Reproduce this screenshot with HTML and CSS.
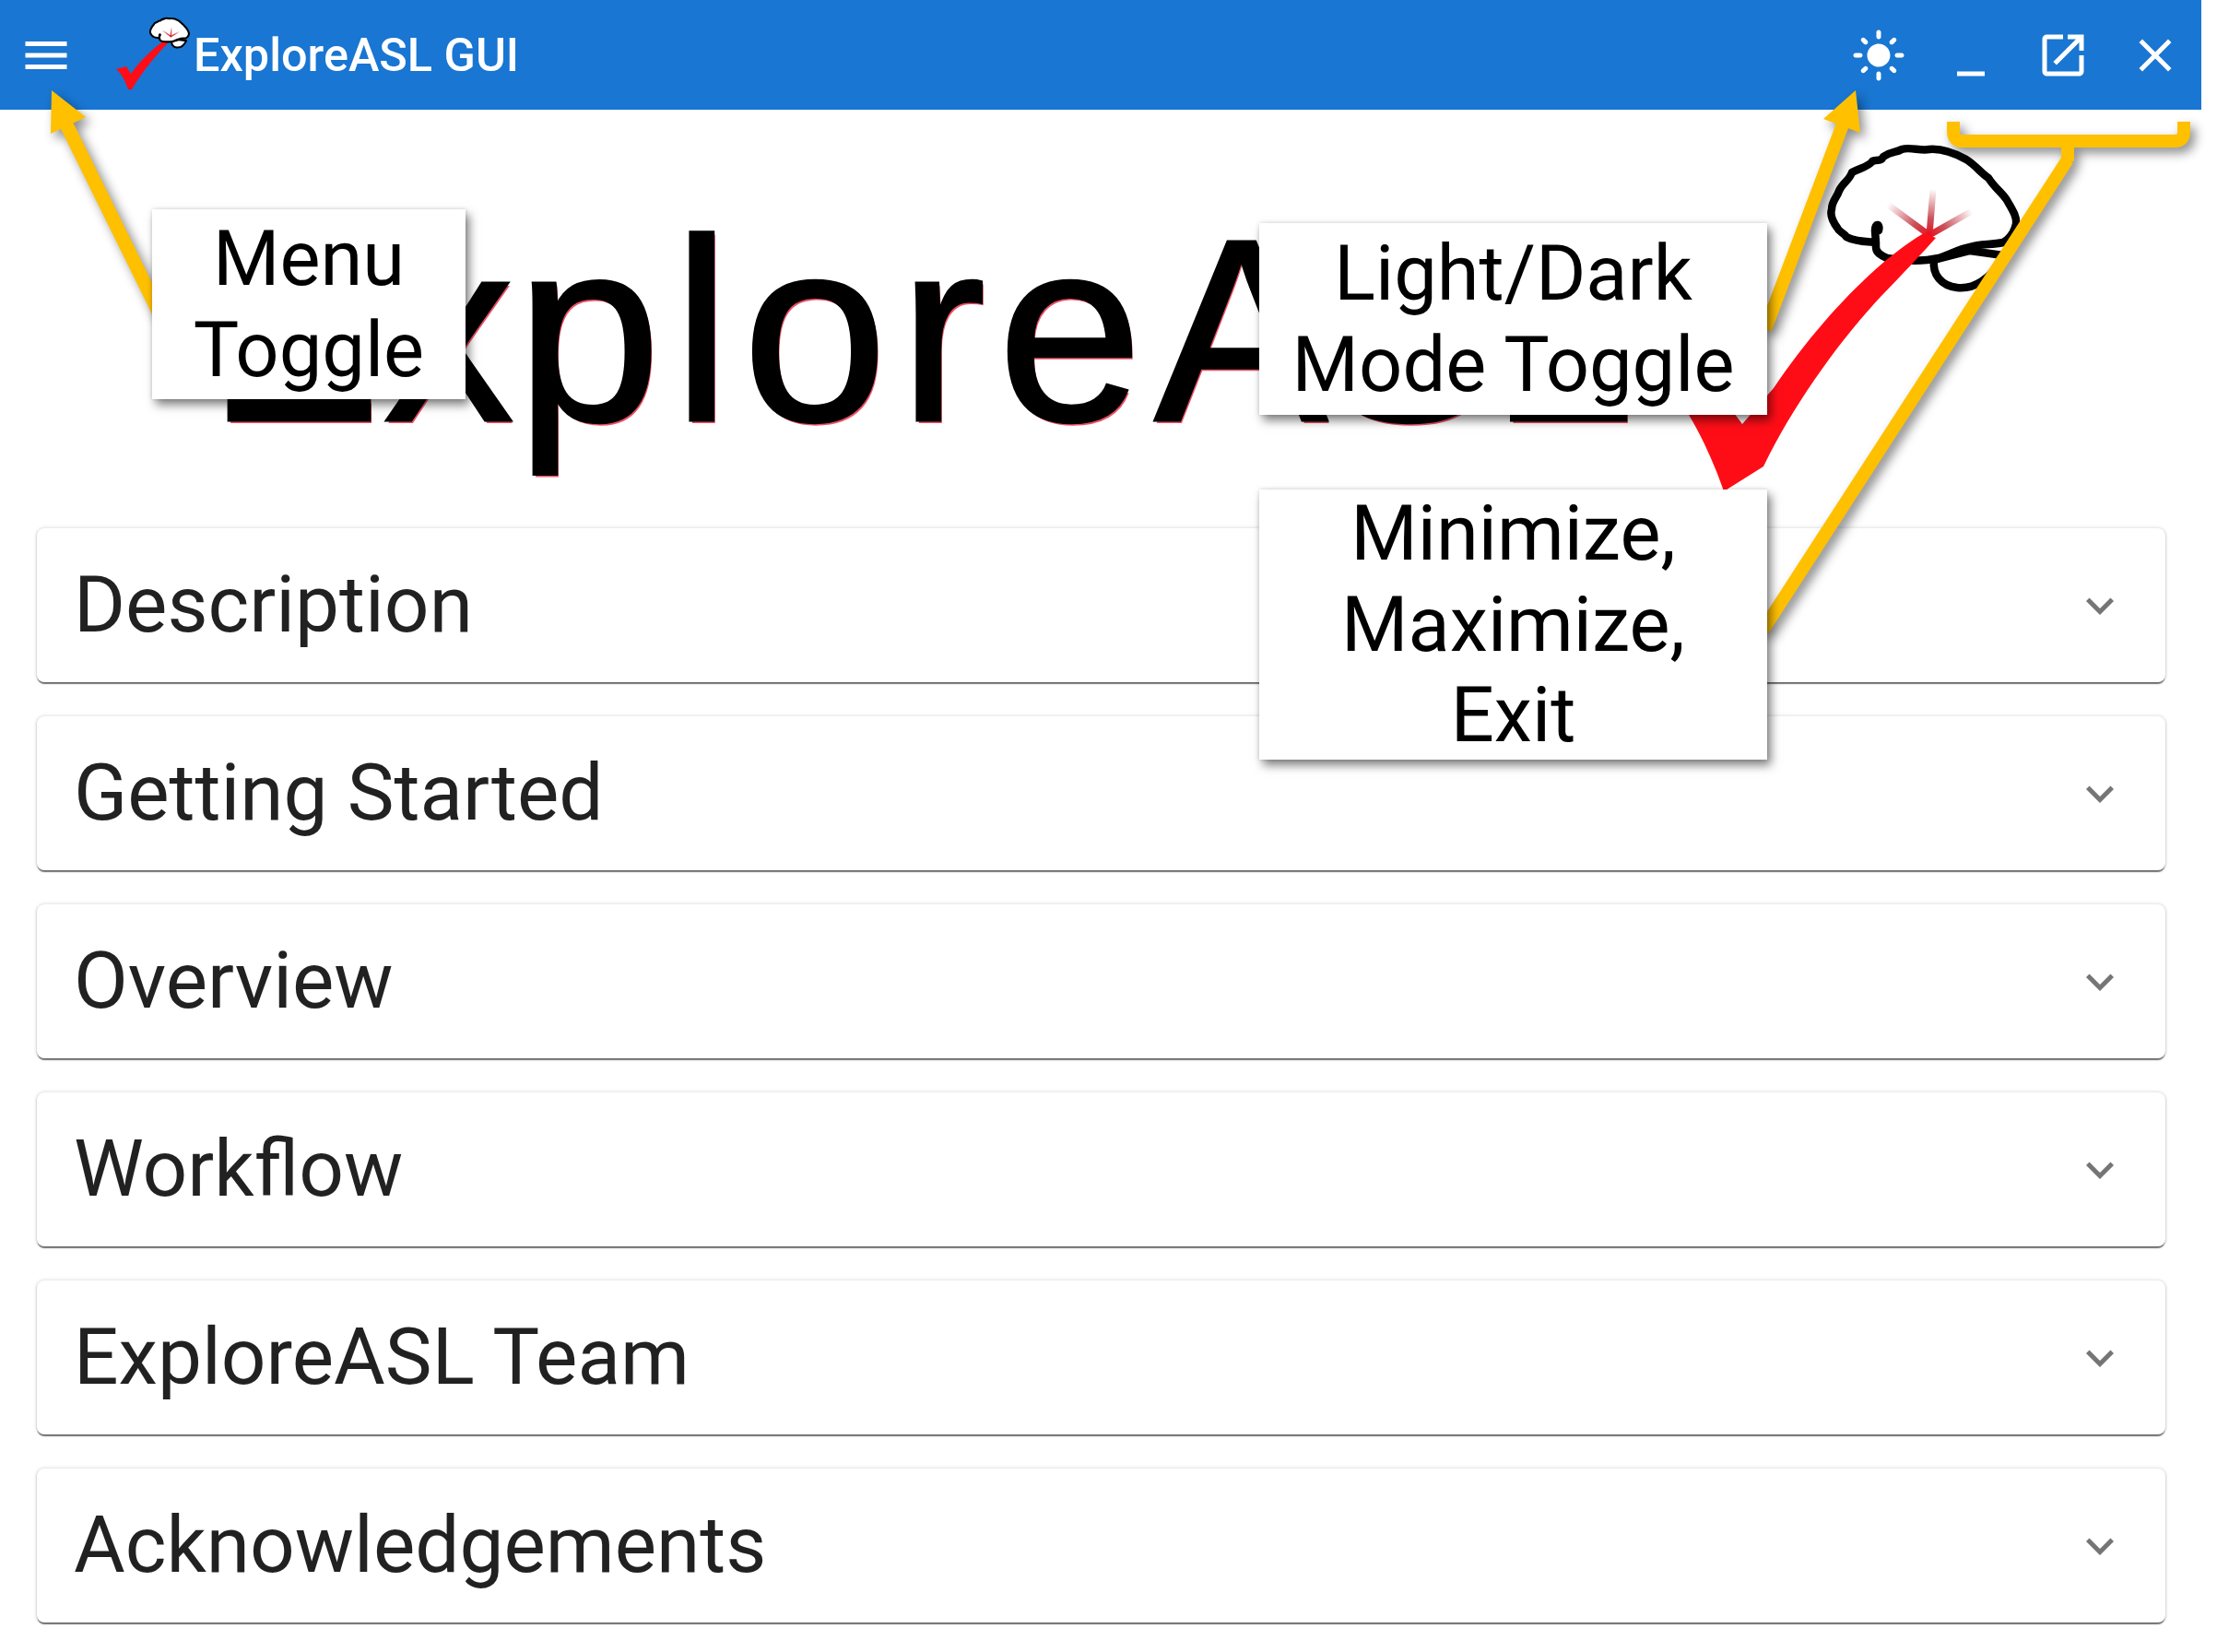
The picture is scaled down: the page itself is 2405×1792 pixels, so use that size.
FILE: index.html
```html
<!DOCTYPE html>
<html lang="en">
<head>
<meta charset="utf-8">
<title>ExploreASL GUI</title>
<link rel="stylesheet" href="styles.css">
</head>
<body>
<div class="app">
  <header class="appbar">
    <button class="icon-btn"><svg class="icon" viewBox="0 0 24 24"><path d="M3 18h18v-2H3v2zm0-5h18v-2H3v2zm0-7v2h18V6H3z"/></svg></button>
    <svg class="mini-logo" viewBox="120 0 90 119">
      <path class="check" d="M126 75 L137 72 L142 80 C152 66 166 52 180 43 L187 42 C170 58 154 78 143 97 L139 97 C136 88 132 80 126 75 Z"/>
      <use class="mini-brain" href="#brain" transform="translate(163 20) scale(.21) translate(-1987 -162)"/>
    </svg>
    <span class="app-title">ExploreASL GUI</span>
    <span class="spacer"></span>
    <button class="icon-btn"><svg class="icon" viewBox="0 0 24 24"><path d="M12 7c-2.76 0-5 2.24-5 5s2.24 5 5 5 5-2.24 5-5-2.24-5-5-5zM2 13h2c.55 0 1-.45 1-1s-.45-1-1-1H2c-.55 0-1 .45-1 1s.45 1 1 1zm18 0h2c.55 0 1-.45 1-1s-.45-1-1-1h-2c-.55 0-1 .45-1 1s.45 1 1 1zM11 2v2c0 .55.45 1 1 1s1-.45 1-1V2c0-.55-.45-1-1-1s-1 .45-1 1zm0 18v2c0 .55.45 1 1 1s1-.45 1-1v-2c0-.55-.45-1-1-1s-1 .45-1 1zM5.99 4.58c-.39-.39-1.03-.39-1.41 0-.39.39-.39 1.03 0 1.41l1.06 1.06c.39.39 1.03.39 1.41 0s.39-1.03 0-1.41L5.99 4.58zm12.37 12.37c-.39-.39-1.03-.39-1.41 0-.39.39-.39 1.03 0 1.41l1.06 1.06c.39.39 1.03.39 1.41 0 .39-.39.39-1.03 0-1.41l-1.06-1.06zm1.06-10.96c.39-.39.39-1.03 0-1.41-.39-.39-1.03-.39-1.41 0l-1.06 1.06c-.39.39-.39 1.03 0 1.41s1.03.39 1.41 0l1.06-1.06zM7.05 18.36c.39-.39.39-1.03 0-1.41-.39-.39-1.03-.39-1.41 0l-1.06 1.06c-.39.39-.39 1.03 0 1.41s1.03.39 1.41 0l1.06-1.06z"/></svg></button>
    <button class="icon-btn"><svg class="icon" viewBox="0 0 24 24"><path d="M6 19h12v2H6z"/></svg></button>
    <button class="icon-btn"><svg class="icon" viewBox="0 0 24 24"><path d="M19 19H5V5h7V3H5c-1.11 0-2 .9-2 2v14c0 1.1.89 2 2 2h14c1.1 0 2-.9 2-2v-7h-2v7zM14 3v2h3.59l-9.83 9.83 1.41 1.41L19 6.41V10h2V3h-7z"/></svg></button>
    <button class="icon-btn"><svg class="icon" viewBox="0 0 24 24"><path d="M19 6.41 17.59 5 12 10.59 6.41 5 5 6.41 10.59 12 5 17.59 6.41 19 12 13.41 17.59 19 19 17.59 13.41 12z"/></svg></button>
  </header>

  <section class="hero">
    <h1 class="hero-text"><span class="ls-ex">Ex</span><span class="ls-plore">plore</span><span class="ls-asl">ASL</span></h1>
    <svg class="hero-mark" viewBox="1780 119 425 454">
      <defs>
        <linearGradient id="rayTop" gradientUnits="userSpaceOnUse" x1="2093" y1="255" x2="2097" y2="205"><stop offset="0" stop-color="#e8101e"/><stop offset=".35" stop-color="#c9505a"/><stop offset="1" stop-color="#c9505a" stop-opacity="0"/></linearGradient>
        <linearGradient id="rayLeft" gradientUnits="userSpaceOnUse" x1="2093" y1="255" x2="2048" y2="222"><stop offset="0" stop-color="#e8101e"/><stop offset=".35" stop-color="#c9505a"/><stop offset="1" stop-color="#c9505a" stop-opacity="0"/></linearGradient>
        <linearGradient id="rayRight" gradientUnits="userSpaceOnUse" x1="2093" y1="255" x2="2139" y2="229"><stop offset="0" stop-color="#e8101e"/><stop offset=".35" stop-color="#c9505a"/><stop offset="1" stop-color="#c9505a" stop-opacity="0"/></linearGradient>
        <g id="brain">
          <path class="brain-line" d="M2098 282 C2096 298 2106 310 2123 312 C2140 314 2160 304 2173 277 L2137 272 L2098 282 Z"/>
          <path class="brain-line" d="M2038 250 C2040 243 2034 241 2034 250 L2035 263 C2024 262 2012 262 2003 257 C2000 252 1995 252 1993 247 C1988 240 1985 233 1987 227 C1987 218 1993 214 1995 207 C1999 198 2006 196 2009 187 C2018 182 2027 181 2031 175 C2038 172 2040 176 2043 170 C2052 164 2056 166 2063 162 C2072 159 2083 164 2093 162 C2106 161 2122 167 2133 173 C2144 180 2148 187 2157 193 C2164 204 2171 208 2177 217 C2182 226 2188 234 2187 243 C2185 252 2180 259 2173 263 C2160 266 2148 264 2137 268 C2125 270 2116 276 2103 280 C2085 284 2065 283 2047 280 C2040 277 2035 274 2035 268 L2035 263"/>
          <path class="ray" stroke="url(#rayTop)" d="M2093 255 L2097 205"/>
          <path class="ray" stroke="url(#rayLeft)" d="M2093 255 L2048 222"/>
          <path class="ray" stroke="url(#rayRight)" d="M2093 255 L2139 229"/>
        </g>
      </defs>
      <use class="big-brain" href="#brain"/>
      <path class="check" d="M2087 253 C2040 280 1975 345 1924 421 L1890 460 L1860 420 L1800 400 L1832 450 C1850 480 1862 510 1870 533 L1913 506 C1945 440 1995 370 2040 322 C2065 296 2085 275 2100 258 Z"/>
    </svg>
  </section>

  <main class="panels">
    <article class="panel"><h2 class="panel-title">Description</h2><svg class="chevron" viewBox="0 0 24 24"><path d="M16.59 8.59 12 13.17 7.41 8.59 6 10l6 6 6-6z"/></svg></article>
    <article class="panel"><h2 class="panel-title">Getting Started</h2><svg class="chevron" viewBox="0 0 24 24"><path d="M16.59 8.59 12 13.17 7.41 8.59 6 10l6 6 6-6z"/></svg></article>
    <article class="panel"><h2 class="panel-title">Overview</h2><svg class="chevron" viewBox="0 0 24 24"><path d="M16.59 8.59 12 13.17 7.41 8.59 6 10l6 6 6-6z"/></svg></article>
    <article class="panel"><h2 class="panel-title">Workflow</h2><svg class="chevron" viewBox="0 0 24 24"><path d="M16.59 8.59 12 13.17 7.41 8.59 6 10l6 6 6-6z"/></svg></article>
    <article class="panel"><h2 class="panel-title">ExploreASL Team</h2><svg class="chevron" viewBox="0 0 24 24"><path d="M16.59 8.59 12 13.17 7.41 8.59 6 10l6 6 6-6z"/></svg></article>
    <article class="panel"><h2 class="panel-title">Acknowledgements</h2><svg class="chevron" viewBox="0 0 24 24"><path d="M16.59 8.59 12 13.17 7.41 8.59 6 10l6 6 6-6z"/></svg></article>
  </main>
</div>

<svg class="arrows" viewBox="0 0 2405 1792">
  <g class="arrow-group">
    <path class="arrow-line arrow-wide" d="M68 127 L172 338"/>
    <path class="arrow-head" d="M56 98 L93 127 L55 145 Z"/>
    <path class="arrow-line" d="M1999 135 L1915 357"/>
    <path class="arrow-head" d="M2013 98 L1978 129 L2018 144 Z"/>
    <path class="arrow-line" d="M2119 132 V143 Q2119 153 2129 153 H2359 Q2369 153 2369 143 V132"/>
    <path class="arrow-line" d="M2243 153 V175"/>
    <path class="arrow-line" d="M2243 173 L1912 684"/>
  </g>
</svg>

<div class="note note-menu">Menu<br>Toggle</div>
<div class="note note-mode">Light/Dark<br>Mode Toggle</div>
<div class="note note-window">Minimize,<br>Maximize,<br>Exit</div>
</body>
</html>
```
FILE: styles.css
```css
* { box-sizing: border-box; }
html, body { margin: 0; padding: 0; background: #fff; }
body { width: 2405px; height: 1792px; position: relative; overflow: hidden; font-family: Roboto, "Liberation Sans", sans-serif; }
.app { width: 2388px; }

.appbar { height: 119px; background: #1976d2; color: #fff; display: flex; align-items: center; }
.icon-btn { width: 100px; height: 100px; padding: 20px; border: 0; background: none; color: inherit; display: flex; flex: none; }
.icon { width: 60px; height: 60px; fill: currentColor; display: block; }
.mini-logo { width: 90px; height: 119px; margin-left: 20px; flex: none; display: block; }
.app-title { font-size: 50.4px; font-weight: 500; line-height: 1; white-space: nowrap; padding-top: 2px; }
.spacer { flex: 1; }

.hero { position: relative; height: 454px; padding: 99px 0 0 225px; }
.hero-text { margin: 0; font-family: "Liberation Sans", Arial, sans-serif; font-weight: 400; font-size: 282px; line-height: 1; color: #000; white-space: nowrap; -webkit-text-stroke: 3px #000; text-shadow: 2px 3px 0 rgba(230, 20, 50, .75); }
.ls-ex { letter-spacing: 3px; }
.ls-plore { letter-spacing: 13px; }
.ls-asl { letter-spacing: -6px; }
.hero-mark { position: absolute; left: 1780px; top: 0; width: 425px; height: 454px; overflow: visible; }
.check { fill: #ff0d17; }
.brain-line { fill: #fff; stroke: #000; stroke-linejoin: round; stroke-linecap: round; }
.big-brain { stroke-width: 8.5; }
.mini-brain { stroke-width: 10; }
.ray { fill: none; stroke-width: 7; stroke-linecap: round; }

.panels { display: flex; flex-direction: column; gap: 37px; padding: 0 39px 0 40px; }
.panel { height: 167px; border-radius: 8px; background: #fff; display: flex; align-items: center; justify-content: space-between; padding: 0 41px 0 40px; box-shadow: 0 3px 1px -1px rgba(0, 0, 0, .45), 0 1px 2px rgba(0, 0, 0, .28), 0 0 4px rgba(0, 0, 0, .16); }
.panel-title { margin: 0; font-size: 85.5px; font-weight: 400; line-height: 1; color: rgba(0, 0, 0, .87); }
.chevron { width: 60px; height: 60px; fill: rgba(0, 0, 0, .54); display: block; }

.arrows { position: absolute; left: 0; top: 0; width: 2405px; height: 1792px; pointer-events: none; }
.arrow-group { filter: drop-shadow(5px 6px 6px rgba(0, 0, 0, .45)); }
.arrow-line { fill: none; stroke: #ffc000; stroke-width: 14; }
.arrow-wide { stroke-width: 15; }
.arrow-head { fill: #ffc000; }

.note { position: absolute; display: flex; align-items: center; justify-content: center; text-align: center; background: #fff; color: #000; font-size: 83px; line-height: 98.5px; padding-top: 1px; box-shadow: 4px 6px 10px rgba(0, 0, 0, .5), 0 0 4px rgba(0, 0, 0, .14); }
.note-menu { left: 165px; top: 227px; width: 340px; height: 206px; }
.note-mode { left: 1366px; top: 242px; width: 551px; height: 208px; }
.note-window { left: 1366px; top: 531px; width: 551px; height: 293px; }
```
